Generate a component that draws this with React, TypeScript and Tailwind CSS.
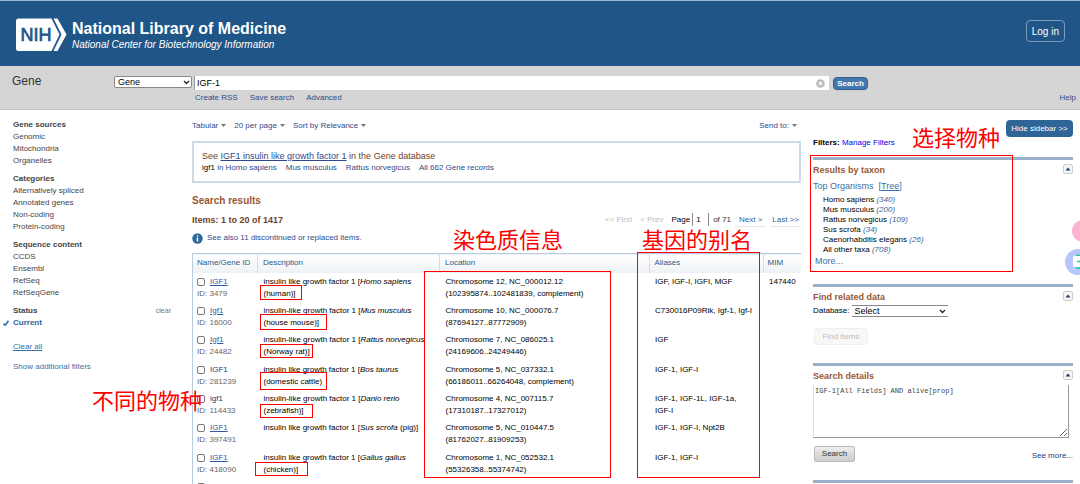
import { useState, type ReactNode } from "react";

// ─── Data ────────────────────────────────────────────

const FILTER_GROUPS = [
  { title: "Gene sources", items: ["Genomic", "Mitochondria", "Organelles"] },
  {
    title: "Categories",
    items: ["Alternatively spliced", "Annotated genes", "Non-coding", "Protein-coding"],
  },
  { title: "Sequence content", items: ["CCDS", "Ensembl", "RefSeq", "RefSeqGene"] },
];

type Gene = {
  id: string;
  name: string;
  visited?: boolean;
  desc: string;
  species: string;
  common: string;
  inline?: boolean;
  chrom: string;
  range: string;
  aliases: string[];
  mim?: string;
};

const GENES: Gene[] = [
  {
    id: "3479", name: "IGF1", desc: "insulin like growth factor 1", species: "Homo sapiens", common: "(human)]",
    chrom: "Chromosome 12, NC_000012.12", range: "(102395874..102481839, complement)",
    aliases: ["IGF", "IGF-I", "IGFI", "MGF"], mim: "147440",
  },
  {
    id: "16000", name: "Igf1", desc: "insulin-like growth factor 1", species: "Mus musculus", common: "(house mouse)]",
    chrom: "Chromosome 10, NC_000076.7", range: "(87694127..87772909)",
    aliases: ["C730016P09Rik", "Igf-1", "Igf-I"],
  },
  {
    id: "24482", name: "Igf1", desc: "insulin-like growth factor 1", species: "Rattus norvegicus", common: "(Norway rat)]",
    chrom: "Chromosome 7, NC_086025.1", range: "(24169606..24249446)", aliases: ["IGF"],
  },
  {
    id: "281239", name: "IGF1", visited: true, desc: "insulin like growth factor 1", species: "Bos taurus", common: "(domestic cattle)",
    chrom: "Chromosome 5, NC_037332.1", range: "(66186011..66264048, complement)", aliases: ["IGF-1", "IGF-I"],
  },
  {
    id: "114433", name: "igf1", visited: true, desc: "insulin-like growth factor 1", species: "Danio rerio", common: "(zebrafish)]",
    chrom: "Chromosome 4, NC_007115.7", range: "(17310187..17327012)",
    aliases: ["IGF-1", "IGF-1L", "IGF-1a", "IGF-I"],
  },
  {
    id: "397491", name: "IGF1", desc: "insulin like growth factor 1", species: "Sus scrofa", common: "(pig)]", inline: true,
    chrom: "Chromosome 5, NC_010447.5", range: "(81762027..81909253)", aliases: ["IGF-1", "IGF-I", "Npt2B"],
  },
  {
    id: "418090", name: "IGF1", desc: "insulin like growth factor 1", species: "Gallus gallus", common: "(chicken)]",
    chrom: "Chromosome 1, NC_052532.1", range: "(55326358..55374742)", aliases: ["IGF-1", "IGF-I"],
  },
  {
    id: "443318", name: "IGF1", desc: "insulin like growth factor 1", species: "Ovis aries", common: "(sheep)]",
    chrom: "Chromosome 3, NC_056056.1", range: "(171124772..171202636)", aliases: ["IGF-1", "IGF-I", "IGFI"],
  },
];

const TAXA = [
  { name: "Homo sapiens", count: 340 },
  { name: "Mus musculus", count: 200 },
  { name: "Rattus norvegicus", count: 109 },
  { name: "Sus scrofa", count: 34 },
  { name: "Caenorhabditis elegans", count: 26 },
  { name: "All other taxa", count: 708 },
];

const MARK_BOXES = [
  "left-[424px] top-[271px] w-[187px] h-[207px]",
  "left-[637px] top-[252px] w-[123px] h-[226px]",
  "left-[810px] top-[155px] w-[203px] h-[117px]",
  "left-[260px] top-[285px] w-[42px] h-[15px]",
  "left-[260px] top-[314px] w-[67px] h-[16px]",
  "left-[260px] top-[344px] w-[53px] h-[14px]",
  "left-[260px] top-[372px] w-[67px] h-[18px]",
  "left-[260px] top-[404px] w-[53px] h-[14px]",
  "left-[255px] top-[462px] w-[53px] h-[14px]",
];

const MARK_LABELS = [
  { text: "染色质信息", place: "left-[453px] top-[226px]" },
  { text: "基因的别名", place: "left-[642px] top-[226px]" },
  { text: "选择物种", place: "left-[912px] top-[124px]" },
  { text: "不同的物种", place: "left-[92px] top-[387px]" },
];

// ─── Small pieces ────────────────────────────────────

function NihLogo() {
  return (
    <svg width="51" height="34" viewBox="0 0 51 34" aria-hidden="true">
      <path d="M2.5 0.5H35.5L43.5 16.5L35.5 33H2.5a2.5 2.5 0 0 1-2.5-2.5V3a2.5 2.5 0 0 1 2.5-2.5z" fill="#fff" />
      <path d="M37.5 0.5H41.5L50.5 16.5L41.5 33H37.5L45.5 16.5z" fill="#fff" />
      <text
        x="4.5"
        y="23"
        fontFamily="Liberation Sans, Arial, sans-serif"
        fontSize="18"
        fill="#205588"
        stroke="#205588"
        strokeWidth="0.7"
      >
        NIH
      </text>
    </svg>
  );
}

function Caret() {
  return (
    <svg width="5" height="3" viewBox="0 0 5 3" className="ml-[3px] inline-block align-middle" aria-hidden="true">
      <path d="M0 0h5L2.5 3z" fill="#777" />
    </svg>
  );
}

function Chevron() {
  return (
    <svg
      width="7"
      height="5"
      viewBox="0 0 7 5"
      className="pointer-events-none absolute right-0.5 top-1"
      aria-hidden="true"
    >
      <path d="M1 1l2.5 2.5L6 1" fill="none" stroke="#222" strokeWidth="1.3" />
    </svg>
  );
}

function Panel({ title, children }: { title: string; children: ReactNode }) {
  return (
    <section className="border-t-3 border-[#98b0c8] pt-1">
      <div className="flex items-start justify-between">
        <h3 className="text-[9px] leading-3 font-bold text-[#985735]">{title}</h3>
        <button
          type="button"
          aria-label={`Collapse ${title}`}
          className="flex h-[10px] w-[10px] items-center justify-center rounded-xs border border-[#ccc] bg-[#f5f5f5]"
        >
          <svg width="6" height="4" viewBox="0 0 6 4" aria-hidden="true">
            <path d="M3 0.5L5.5 3.5H0.5z" fill="#1f3f66" />
          </svg>
        </button>
      </div>
      {children}
    </section>
  );
}

// ─── Header and search ───────────────────────────────

function Header() {
  return (
    <header className="flex h-[66px] items-start justify-between border-t border-[#a6bbcf] bg-[#205588] pr-[15px] pl-4 text-white">
      <a href="#home" className="flex items-start gap-1 pt-[17px]">
        <NihLogo />
        <span className="block pl-px">
          <span className="block text-[16px] leading-[22px] font-bold">National Library of Medicine</span>
          <span className="block text-[10px] leading-[10px] italic">
            National Center for Biotechnology Information
          </span>
        </span>
      </a>
      <button type="button" className="mt-[19px] h-[22px] rounded-sm border border-[#7d9cbb] px-[5px] text-[10px]">
        Log in
      </button>
    </header>
  );
}

function SearchBar() {
  const [term, setTerm] = useState("IGF-1");
  return (
    <div className="flex h-[44px] border-b border-[#c4c4c4] bg-[#d5d5d5] pt-2.5">
      <h2 className="w-[114px] shrink-0 pl-3 text-[12px] leading-[10px] text-[#333]">Gene</h2>
      <form className="flex flex-1 items-start" onSubmit={(e) => e.preventDefault()}>
        <div className="relative w-[78px]">
          <select
            aria-label="Database"
            defaultValue="Gene"
            className="block h-3 w-full appearance-none rounded-xs border border-[#888] bg-white pl-[3px] text-[9px] leading-[10px] text-black"
          >
            <option>Gene</option>
          </select>
          <Chevron />
        </div>
        <div className="ml-0.5 flex-1">
          <div className="relative">
            <input
              type="text"
              aria-label="Search term"
              value={term}
              onChange={(e) => setTerm(e.target.value)}
              className="block h-[14px] w-full border-l border-[#999] bg-white pl-0.5 text-[9px] text-black"
            />
            <button
              type="button"
              aria-label="Clear"
              onClick={() => setTerm("")}
              className="absolute top-[3px] right-1 block"
            >
              <svg width="9" height="9" viewBox="0 0 9 9" aria-hidden="true">
                <circle cx="4.5" cy="4.5" r="4.3" fill="#bbb" />
                <path d="M3 3l3 3M6 3l-3 3" stroke="#fff" strokeWidth="1.1" />
              </svg>
            </button>
          </div>
          <nav className="flex gap-3 pt-0.5 pl-px text-[8px] leading-3 text-[#2f4a8b]">
            <a href="#rss">Create RSS</a>
            <a href="#save">Save search</a>
            <a href="#advanced">Advanced</a>
          </nav>
        </div>
        <button
          type="submit"
          className="mt-px ml-1 h-[13px] w-[35px] rounded-sm border border-[#2f6090] bg-[#4378ac] text-[8px] leading-[10px] font-bold text-white shadow-xs"
        >
          Search
        </button>
      </form>
      <div className="flex w-[212px] shrink-0 items-end justify-end pr-1 pb-[5px]">
        <a href="#help" className="text-[8px] leading-3 text-[#2f4a8b]">
          Help
        </a>
      </div>
    </div>
  );
}

// ─── Left filters ────────────────────────────────────

function Filters() {
  return (
    <aside className="w-[192px] shrink-0 pt-[9px] pr-[21px] pl-[13px] text-[8px] leading-3 text-[#444]">
      {FILTER_GROUPS.map((group) => (
        <div key={group.title} className="mb-1.5">
          <h3 className="font-bold">{group.title}</h3>
          <ul>
            {group.items.map((item) => (
              <li key={item}>
                <a href="#filter">{item}</a>
              </li>
            ))}
          </ul>
        </div>
      ))}
      <div className="flex justify-between">
        <h3 className="font-bold">Status</h3>
        <a href="#clear" className="text-[7px] text-[#777]">
          clear
        </a>
      </div>
      <a href="#current" className="-ml-2.5 flex items-center gap-1 font-bold text-[#2f6496]">
        <svg width="6" height="6" viewBox="0 0 6 6" aria-hidden="true">
          <path d="M0.5 3.5L2.2 5.2L5.5 0.8" fill="none" stroke="#2f6fb0" strokeWidth="1.6" />
        </svg>
        Current
      </a>
      <a href="#clear-all" className="mt-3 block text-[#3a6fa8] underline">
        Clear all
      </a>
      <a href="#more-filters" className="mt-2 block text-[#3a6fa8]">
        Show additional filters
      </a>
    </aside>
  );
}

// ─── Results ─────────────────────────────────────────

function Pager() {
  return (
    <div className="flex h-[13px] items-center text-[8px] leading-3">
      <span className="mr-2 text-[#bbb]">&lt;&lt; First</span>
      <span className="mr-2 text-[#bbb]">&lt; Prev</span>
      <label htmlFor="page" className="mr-0.5 text-black">
        Page
      </label>
      <input
        id="page"
        type="text"
        defaultValue="1"
        className="mr-1 h-[13px] w-[17px] border-x border-[#888] pl-[3px] text-[8px] text-black"
      />
      <span className="mr-1 text-[#333]">of 71</span>
      <a href="#next" className="mr-1 border-y border-t-transparent border-b-[#e5e5e5] px-1 text-[#2f6496]">
        Next &gt;
      </a>
      <a href="#last" className="border-y border-t-transparent border-b-[#e5e5e5] px-0.5 text-[#2f6496]">
        Last &gt;&gt;
      </a>
    </div>
  );
}

function GeneRow({ gene }: { gene: Gene }) {
  return (
    <tr className="h-[29px] align-top nth-[3n]:h-[30px]">
      <td className="border-l border-[#b8cde2] pt-[3px] pl-1">
        <div className="flex items-center gap-[5px]">
          <input
            type="checkbox"
            id={`gene-${gene.id}`}
            aria-label={`Select ${gene.name} ${gene.species}`}
            className="h-2 w-2 appearance-none rounded-xs border border-[#777] bg-white checked:bg-[#2f6496]"
          />
          <a href="#gene" className={gene.visited ? "text-[#1f3a75]" : "text-[#2f5a9b] underline"}>
            {gene.name}
          </a>
        </div>
        <div className="text-[#666]">ID: {gene.id}</div>
      </td>
      <td className="pt-[3px] pl-1.5 whitespace-nowrap">
        {gene.desc} [<i>{gene.species}</i>
        {gene.inline ? " " : <br />}
        {gene.common}
      </td>
      <td className="pt-[3px] pl-1.5 whitespace-nowrap">
        {gene.chrom}
        <br />
        {gene.range}
      </td>
      <td className="pt-[3px] pr-2 pl-1.5">
        {gene.aliases.map((alias, i) => (
          <span key={alias}>
            <span className="whitespace-nowrap">
              {alias}
              {i < gene.aliases.length - 1 && ","}
            </span>{" "}
          </span>
        ))}
      </td>
      <td className="pt-[3px] pl-1.5">{gene.mim}</td>
    </tr>
  );
}

function Results() {
  return (
    <main className="min-w-0 flex-1 pt-2.5">
      <div className="flex justify-between pr-1 text-[8px] leading-3 text-[#2f4a8b]">
        <div className="flex gap-2">
          <button type="button">
            Tabular
            <Caret />
          </button>
          <button type="button">
            20 per page
            <Caret />
          </button>
          <button type="button">
            Sort by Relevance
            <Caret />
          </button>
        </div>
        <button type="button">
          Send to:
          <Caret />
        </button>
      </div>

      <div className="mt-[9px] h-[42px] border-2 border-[#cddbe8] pt-[7px] pl-2 text-[8px] leading-3">
        <p className="text-[9px] text-[#724128]">
          See{" "}
          <a href="#igf1" className="text-[#2f4a8b] underline">
            IGF1 insulin like growth factor 1
          </a>{" "}
          in the Gene database
        </p>
        <p className="flex gap-[9px] text-[#2f4a8b]">
          <span>
            <span className="text-black">igf1</span> in <a href="#homo">Homo sapiens</a>
          </span>
          <a href="#mus">Mus musculus</a>
          <a href="#rattus">Rattus norvegicus</a>
          <a href="#all">All 662 Gene records</a>
        </p>
      </div>

      <h2 className="mt-3 text-[10px] leading-3 font-bold text-[#985735]">Search results</h2>
      <div className="mt-1.5 flex items-center justify-between">
        <h3 className="text-[9px] leading-3 font-bold text-[#724128]">Items: 1 to 20 of 1417</h3>
        <Pager />
      </div>
      <p className="mt-1.5 flex items-center gap-1 text-[8px] leading-3 text-[#2f4a8b]">
        <svg width="11" height="11" viewBox="0 0 11 11" aria-hidden="true">
          <circle cx="5.5" cy="5.5" r="5.2" fill="#2a6a9e" />
          <path d="M5.5 4.6v4M5.5 2.2v1.4" stroke="#fff" strokeWidth="1.5" />
        </svg>
        <a href="#discontinued">See also 11 discontinued or replaced items.</a>
      </p>

      <table className="mt-[9px] w-full table-fixed text-[8px] leading-3 text-black">
        <thead>
          <tr className="h-[19px] border-t border-[#b8cde2] bg-linear-to-b from-white to-[#eef1f4] text-left text-[#2f5a8b]">
            <th className="w-[65px] border-l border-[#b8cde2] pl-1 font-normal whitespace-nowrap">Name/Gene ID</th>
            <th className="w-[182px] border-l border-[#d5dde5] pl-[5px] font-normal">Description</th>
            <th className="border-l border-[#d5dde5] pl-[5px] font-normal">Location</th>
            <th className="w-[114px] border-l border-[#d5dde5] pl-[5px] font-normal">Aliases</th>
            <th className="w-[38px] border-l border-[#d5dde5] pl-1 font-normal">MIM</th>
          </tr>
        </thead>
        <tbody>
          {GENES.map((gene) => (
            <GeneRow key={gene.id} gene={gene} />
          ))}
        </tbody>
      </table>
    </main>
  );
}

// ─── Right sidebar ───────────────────────────────────

function Sidebar() {
  return (
    <aside className="w-[279px] shrink-0 pt-2.5 pr-[7px] pl-3 text-[8px] leading-3">
      <div className="flex h-[37px] items-start justify-between">
        <p className="pt-[17px] text-black">
          <b>Filters:</b>{" "}
          <a href="#manage" className="text-[#0000ee]">
            Manage Filters
          </a>
        </p>
        <button type="button" className="h-[17px] w-[67px] rounded-sm bg-[#2f6496] text-[8px] text-white">
          Hide sidebar &gt;&gt;
        </button>
      </div>

      <div className="h-[127px]">
        <Panel title="Results by taxon">
          <p className="mt-1 text-[9px] text-[#3a6fa8]">
            Top Organisms&nbsp; [
            <a href="#tree" className="underline">
              Tree
            </a>
            ]
          </p>
          <ul className="mt-[3px] pl-2.5 leading-[10px] text-black">
            {TAXA.map((taxon) => (
              <li key={taxon.name}>
                <a href="#taxon">{taxon.name}</a> <i className="text-[#2f6496]">({taxon.count})</i>
              </li>
            ))}
          </ul>
          <a href="#more" className="ml-0.5 block text-[9px] leading-3 text-[#3a6fa8]">
            More...
          </a>
        </Panel>
      </div>

      <div className="h-[79px]">
        <Panel title="Find related data">
          <div className="mt-0.5 flex items-center gap-[3px]">
            <label htmlFor="related">Database:</label>
            <div className="relative w-24">
              <select
                id="related"
                className="block h-3 w-full appearance-none border-y border-[#888] bg-white pl-0.5 text-[9px] leading-[10px] text-black"
              >
                <option>Select</option>
              </select>
              <Chevron />
            </div>
          </div>
          <button
            type="button"
            disabled
            className="mt-[11px] ml-px h-[17px] w-[54px] rounded-sm border border-[#eee] bg-[#f8f8f8] text-[#bbb]"
          >
            Find items
          </button>
        </Panel>
      </div>

      <div className="h-[117px]">
        <Panel title="Search details">
          <textarea
            aria-label="Search details"
            defaultValue="IGF-1[All Fields] AND alive[prop]"
            className="mt-[3px] block h-[53px] w-64 border-r border-b border-l border-[#999] border-l-[#ddd] px-px py-0.5 font-['Liberation_Mono',monospace] text-[7px] leading-2 text-[#444]"
          />
          <div className="mt-2 flex items-start justify-between">
            <button
              type="button"
              className="ml-px h-4 w-[41px] rounded-xs border border-[#bbb] bg-linear-to-b from-[#eee] to-[#ccc] text-[#333]"
            >
              Search
            </button>
            <a href="#see-more" className="pt-1 text-[#1f3f75]">
              See more...
            </a>
          </div>
        </Panel>
      </div>
      <div className="border-t-3 border-[#98b0c8]" />
    </aside>
  );
}

// ─── Overlays ────────────────────────────────────────

function FloatingTools() {
  return (
    <div className="absolute top-[219px] right-0 flex flex-col items-end">
      <button type="button" aria-label="Favorites">
        <svg width="9" height="26" viewBox="0 0 9 26" aria-hidden="true">
          <circle cx="12" cy="12" r="11" fill="#fbb3d0" />
        </svg>
      </button>
      <button type="button" aria-label="Translate">
        <svg width="16" height="30" viewBox="0 0 16 30" aria-hidden="true">
          <circle cx="14" cy="17" r="13" fill="#b9c6fb" />
          <path d="M12 10.5h4M12 23h4" stroke="#30cfa4" strokeWidth="2" />
          <rect x="9" y="11" width="12" height="11" rx="1.5" fill="#fff" />
          <path d="M13 16.5h3" fill="none" stroke="#30cfa4" strokeWidth="1.6" />
        </svg>
      </button>
    </div>
  );
}

function Marks() {
  return (
    <div className="pointer-events-none absolute inset-0">
      {MARK_BOXES.map((place) => (
        <div key={place} className={`absolute border border-[#ff0000] ${place}`} />
      ))}
      {MARK_LABELS.map((label) => (
        <span
          key={label.text}
          className={`absolute font-['Noto_Sans_CJK_SC',sans-serif] text-[22px] leading-6 whitespace-nowrap text-[#ff0000] ${label.place}`}
        >
          {label.text}
        </span>
      ))}
    </div>
  );
}

export default function App() {
  return (
    <div className="relative h-screen overflow-hidden bg-white font-['Liberation_Sans',Arial,sans-serif]">
      <Header />
      <SearchBar />
      <div className="flex">
        <Filters />
        <Results />
        <Sidebar />
      </div>
      <FloatingTools />
      <Marks />
    </div>
  );
}
